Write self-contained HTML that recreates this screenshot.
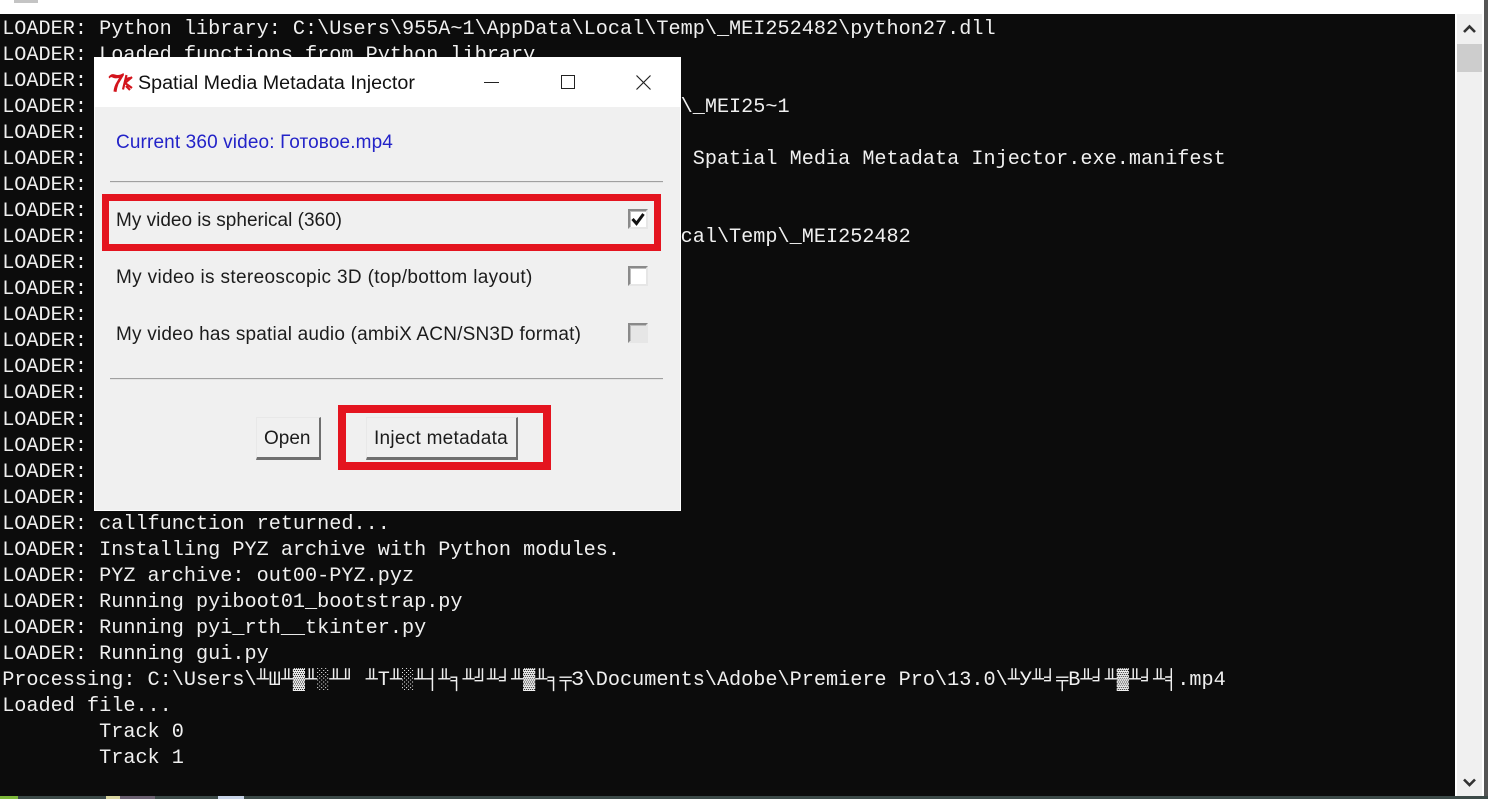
<!DOCTYPE html>
<html lang="en">
<head>
<meta charset="utf-8">
<title>Spatial Media Metadata Injector</title>
<style>
html,body{margin:0;padding:0;width:1488px;height:799px;overflow:hidden;background:#fff}
body{position:relative;font-family:"Liberation Sans","Noto Sans CJK JP",sans-serif}
.a{position:absolute}
#term{left:0;top:14px;width:1455px;height:782px;background:#0c0c0c;overflow:hidden}
#term pre{position:absolute;left:2.2px;top:2.6px;margin:0;font:20.19px/26.07px "Liberation Mono","DejaVu Sans Mono",monospace;color:#f0f0f0;white-space:pre;filter:blur(.35px)}
.t{position:absolute;white-space:nowrap;color:#1c1c1c;line-height:24px;font-size:19px;filter:blur(.3px)}
.cb{position:absolute;left:628px;width:16px;height:16px;background:#fff;border:2px solid;border-color:#8a8a8a #e6e6e6 #e6e6e6 #8a8a8a;box-shadow:inset 1px 1px 0 #bdbdbd}
.btn{position:absolute;top:417px;height:39px;background:#f0f0f0;border:1px solid;border-color:#e8e8e8 #6f6f6f #6f6f6f #e8e8e8;border-bottom-width:3px;border-right-width:2px;box-sizing:content-box}
.sep{position:absolute;left:110px;width:553px;height:1px;background:#a0a0a0;border-bottom:1px solid #e4e4e4}
.red{position:absolute;border:7px solid #e4141f;box-sizing:border-box}
</style>
</head>
<body>
<div class="a" style="left:0;top:0;width:1488px;height:14px;background:#fff"></div>
<div class="a" style="left:14px;top:0;width:24px;height:3px;background:#c4c4c4"></div>

<div class="a" id="term">
<pre>LOADER: Python library: C:\Users\955A~1\AppData\Local\Temp\_MEI252482\python27.dll
LOADER: Loaded functions from Python library.
LOADER:
LOADER:                                                 \_MEI25~1
LOADER:
LOADER:                                                  Spatial Media Metadata Injector.exe.manifest
LOADER:
LOADER:
LOADER:                                                 cal\Temp\_MEI252482
LOADER:
LOADER:
LOADER:
LOADER:
LOADER:
LOADER:
LOADER:
LOADER:
LOADER:
LOADER:
LOADER: callfunction returned...
LOADER: Installing PYZ archive with Python modules.
LOADER: PYZ archive: out00-PYZ.pyz
LOADER: Running pyiboot01_bootstrap.py
LOADER: Running pyi_rth__tkinter.py
LOADER: Running gui.py
Processing: C:\Users\╨Ш╨▓╨░╨╜ ╨Т╨░╨┤╨╕╨╝╨╛╨▓╨╕╤З\Documents\Adobe\Premiere Pro\13.0\╨У╨╛╤В╨╛╨▓╨╛╨╡.mp4
Loaded file...
        Track 0
        Track 1</pre>
</div>

<!-- scrollbar -->
<div class="a" style="left:1455px;top:14px;width:29px;height:782px;background:#fff"></div>
<div class="a" style="left:1457px;top:14px;width:25px;height:782px;background:#f0f0f0"></div>
<div class="a" style="left:1457px;top:44px;width:25px;height:28px;background:#cdcdcd"></div>
<svg class="a" style="left:1457px;top:14px" width="25" height="30"><path d="M7 18 L12.5 12.5 L18 18" fill="none" stroke="#333" stroke-width="2.6"/></svg>
<svg class="a" style="left:1457px;top:770px" width="25" height="26"><path d="M7 9.5 L12.5 15 L18 9.5" fill="none" stroke="#333" stroke-width="2.6"/></svg>
<div class="a" style="left:1484px;top:0;width:4px;height:799px;background:#555"></div>

<!-- desktop strip -->
<div class="a" style="left:0;top:796px;width:1488px;height:3px;background:#3c4a48"></div>
<div class="a" style="left:0;top:796px;width:18px;height:3px;background:#7db83a"></div>
<div class="a" style="left:106px;top:796px;width:14px;height:3px;background:#d8d4a0"></div>
<div class="a" style="left:120px;top:796px;width:35px;height:3px;background:#6a6070"></div>
<div class="a" style="left:218px;top:796px;width:26px;height:3px;background:#c8d4e8"></div>

<!-- dialog -->
<div class="a" style="left:94px;top:57px;width:587px;height:454px;background:#fff"></div>
<div class="a" style="left:95px;top:107px;width:585px;height:403px;background:#f0f0f0"></div>

<svg class="a" style="left:106px;top:70px" width="30" height="24">
<path d="M2.5 7 Q5 3 9 4.5 Q13 6 17.5 3 L18 5 Q15 10 12.5 14 Q11 18 10.5 22 L7.5 21.5 Q8 16 11 11.5 L13 8 Q8.5 9 6.5 7.5 Q4.5 6.5 3.5 8.5 Z" fill="#d3141c"/>
<path d="M20.5 5 L17 19.5 M19 13 L26 7 M19 13 L26 18 M20 9 L24 8 M20 16 L24 20" stroke="#d3141c" stroke-width="2.2" fill="none"/>
</svg>
<div class="t" style="left:138px;top:71px;font-size:19.7px;color:#111">Spatial Media Metadata Injector</div>

<div class="a" style="left:484px;top:82px;width:15px;height:1px;background:#222"></div>
<div class="a" style="left:561px;top:75px;width:12px;height:12px;border:1.5px solid #222"></div>
<svg class="a" style="left:635px;top:74px" width="17" height="17"><path d="M1.5 1.5 L15.5 15.5 M15.5 1.5 L1.5 15.5" stroke="#222" stroke-width="1.2" fill="none"/></svg>

<div class="t" style="left:116px;top:131px;color:#2323c8;letter-spacing:.13px">Current 360 video: Готовое.mp4</div>
<div class="sep" style="top:181px"></div>

<div class="red" style="left:102px;top:194px;width:559px;height:57px"></div>
<div class="t" style="left:116px;top:209px">My video is spherical (360)</div>
<div class="cb" style="top:209px"></div>
<svg class="a" style="left:628px;top:209px" width="20" height="20"><path d="M4.5 10 L8.5 14.5 L15.5 5" fill="none" stroke="#111" stroke-width="3"/></svg>

<div class="t" style="left:116px;top:266px;letter-spacing:.35px">My video is stereoscopic 3D (top/bottom layout)</div>
<div class="cb" style="top:266px"></div>

<div class="t" style="left:116px;top:323px;letter-spacing:.2px">My video has spatial audio (ambiX ACN/SN3D format)</div>
<div class="cb" style="top:323px;background:#e6e6e6"></div>

<div class="sep" style="top:378px"></div>

<div class="btn" style="left:256px;width:62px"></div>
<div class="t" style="left:264px;top:427px">Open</div>

<div class="red" style="left:338px;top:405px;width:213px;height:65px;border-width:8px"></div>
<div class="btn" style="left:366px;width:149px"></div>
<div class="t" style="left:374px;top:427px;letter-spacing:.27px">Inject metadata</div>
</body>
</html>
